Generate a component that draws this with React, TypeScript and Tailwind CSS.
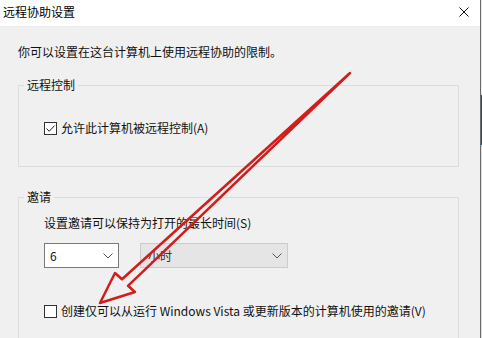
import React from "react";

const FONT = "font-['Noto_Sans_CJK_SC','Noto_Sans',sans-serif]";

function Checkbox({ checked }: { checked?: boolean }) {
  return (
    <span className="flex h-[13px] w-[13px] shrink-0 items-center justify-center border border-[#333333] bg-white">
      {checked && (
        <svg width="11" height="11" viewBox="0 0 11 11">
          <path d="M1.5 5.5 L4.2 8.3 L9.6 2.6" fill="none" stroke="#1b1b1b" strokeWidth="1" />
        </svg>
      )}
    </span>
  );
}

function Chevron() {
  return (
    <svg width="10" height="6" viewBox="0 0 10 6">
      <path d="M0.5 0.5 L5 5 L9.5 0.5" fill="none" stroke="#555" strokeWidth="1" />
    </svg>
  );
}

export default function App() {
  return (
    <div className={`relative flex h-[338px] w-[482px] overflow-hidden bg-[#f0f0f0] text-[12px] leading-[16px] text-[#111] ${FONT}`}>
      {/* 窗口 */}
      <div className="flex w-[480px] flex-col">
        {/* 标题栏 */}
        <div className="flex h-[27px] shrink-0 items-center justify-between border-b border-[#ececec] bg-white pb-[2px] pl-[3px] pr-[11px]">
          <span className="text-[12px] text-[#000]">远程协助设置</span>
          <svg width="10" height="10" viewBox="0 0 10 10">
            <path d="M0.5 0.5 L9.5 9.5 M9.5 0.5 L0.5 9.5" stroke="#111" strokeWidth="1" />
          </svg>
        </div>

        <div className="flex shrink-0 flex-col pl-[18px] pt-[17px]">
          <p>你可以设置在这台计算机上使用远程协助的限制。</p>

          {/* 远程控制 */}
          <fieldset className="mt-[17px] w-[441px] border border-[#dcdcdc]">
            <legend className="ml-[5px] px-[3px]">远程控制</legend>
            <div className="pb-[30px] pl-[25px] pt-[27px]">
              <label className="flex items-center gap-[4px]">
                <Checkbox checked />
                <span>允许此计算机被远程控制(A)</span>
              </label>
            </div>
          </fieldset>

          {/* 邀请 */}
          <fieldset className="mt-[22px] w-[441px] border border-[#dcdcdc]">
            <legend className="ml-[5px] px-[3px]">邀请</legend>
            <div className="pb-[30px] pl-[25px] pt-[10px]">
              <p>设置邀请可以保持为打开的最长时间(S)</p>
              <div className="mt-[12px] flex gap-[21px]">
                <div className="flex h-[25px] w-[75px] items-center justify-between border border-[#7a7a7a] bg-white pl-[5px] pr-[5px]">
                  <span>6</span>
                  <Chevron />
                </div>
                <div className="flex h-[25px] w-[148px] items-center justify-between border border-[#cccccc] bg-[#e5e5e5] pl-[7px] pr-[5px]">
                  <span className="text-[#333]">小时</span>
                  <Chevron />
                </div>
              </div>
              <label className="mt-[35px] flex items-center gap-[4px]">
                <Checkbox />
                <span>创建仅可以从运行 Windows Vista 或更新版本的计算机使用的邀请(V)</span>
              </label>
            </div>
          </fieldset>
        </div>
      </div>

      {/* 窗口右边框 */}
      <div className="w-[1px] bg-[#6a6a6a]" />
      <div className="flex w-[1px] flex-col">
        <div className="h-[95px] bg-[#e8e8e8]" />
        <div className="h-[50px] bg-[#1f4e6e]" />
        <div className="flex-1 bg-[#dcdcdc]" />
      </div>

      {/* 红色箭头 */}
      <svg className="pointer-events-none absolute inset-0" width="482" height="338" viewBox="0 0 482 338">
        <polygon
          points="350,73 128,285.8 135,292 100,303 115,273 122,279.2"
          fill="none"
          stroke="#d21d1d"
          strokeWidth="2.5"
          strokeLinejoin="round"
        />
      </svg>
    </div>
  );
}
